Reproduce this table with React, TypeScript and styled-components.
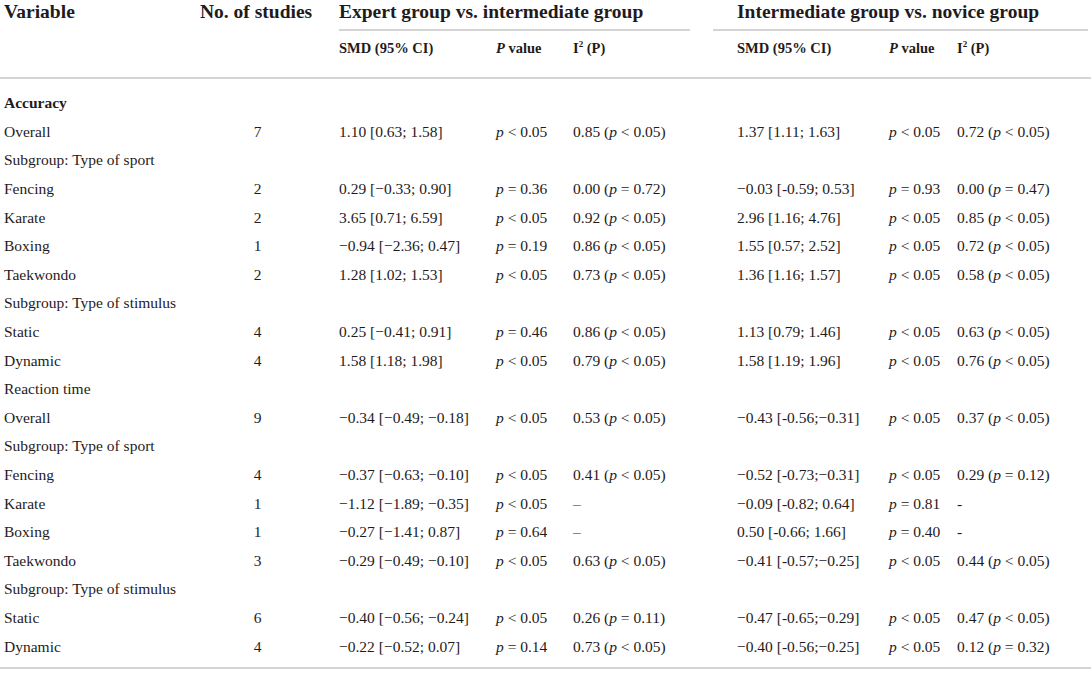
import React from 'react';
import styled, { createGlobalStyle } from 'styled-components';

type DataRow = {
    kind: 'data';
    label: string;
    n: string;
    cells: string[];
};

type LabelRow = {
    kind: 'label';
    label: string;
    bold?: boolean;
};

type Row = DataRow | LabelRow;

const rows: Row[] = [
    { kind: 'label', label: 'Accuracy', bold: true },
    { kind: 'data', label: 'Overall', n: '7', cells: ['1.10 [0.63; 1.58]', 'p < 0.05', '0.85 (p < 0.05)', '1.37 [1.11; 1.63]', 'p < 0.05', '0.72 (p < 0.05)'] },
    { kind: 'label', label: 'Subgroup: Type of sport' },
    { kind: 'data', label: 'Fencing', n: '2', cells: ['0.29 [\u22120.33; 0.90]', 'p = 0.36', '0.00 (p = 0.72)', '\u22120.03 [-0.59; 0.53]', 'p = 0.93', '0.00 (p = 0.47)'] },
    { kind: 'data', label: 'Karate', n: '2', cells: ['3.65 [0.71; 6.59]', 'p < 0.05', '0.92 (p < 0.05)', '2.96 [1.16; 4.76]', 'p < 0.05', '0.85 (p < 0.05)'] },
    { kind: 'data', label: 'Boxing', n: '1', cells: ['\u22120.94 [\u22122.36; 0.47]', 'p = 0.19', '0.86 (p < 0.05)', '1.55 [0.57; 2.52]', 'p < 0.05', '0.72 (p < 0.05)'] },
    { kind: 'data', label: 'Taekwondo', n: '2', cells: ['1.28 [1.02; 1.53]', 'p < 0.05', '0.73 (p < 0.05)', '1.36 [1.16; 1.57]', 'p < 0.05', '0.58 (p < 0.05)'] },
    { kind: 'label', label: 'Subgroup: Type of stimulus' },
    { kind: 'data', label: 'Static', n: '4', cells: ['0.25 [\u22120.41; 0.91]', 'p = 0.46', '0.86 (p < 0.05)', '1.13 [0.79; 1.46]', 'p < 0.05', '0.63 (p < 0.05)'] },
    { kind: 'data', label: 'Dynamic', n: '4', cells: ['1.58 [1.18; 1.98]', 'p < 0.05', '0.79 (p < 0.05)', '1.58 [1.19; 1.96]', 'p < 0.05', '0.76 (p < 0.05)'] },
    { kind: 'label', label: 'Reaction time' },
    { kind: 'data', label: 'Overall', n: '9', cells: ['\u22120.34 [\u22120.49; \u22120.18]', 'p < 0.05', '0.53 (p < 0.05)', '\u22120.43 [-0.56;\u22120.31]', 'p < 0.05', '0.37 (p < 0.05)'] },
    { kind: 'label', label: 'Subgroup: Type of sport' },
    { kind: 'data', label: 'Fencing', n: '4', cells: ['\u22120.37 [\u22120.63; \u22120.10]', 'p < 0.05', '0.41 (p < 0.05)', '\u22120.52 [-0.73;\u22120.31]', 'p < 0.05', '0.29 (p = 0.12)'] },
    { kind: 'data', label: 'Karate', n: '1', cells: ['\u22121.12 [\u22121.89; \u22120.35]', 'p < 0.05', '\u2013', '\u22120.09 [-0.82; 0.64]', 'p = 0.81', '-'] },
    { kind: 'data', label: 'Boxing', n: '1', cells: ['\u22120.27 [\u22121.41; 0.87]', 'p = 0.64', '\u2013', '0.50 [-0.66; 1.66]', 'p = 0.40', '-'] },
    { kind: 'data', label: 'Taekwondo', n: '3', cells: ['\u22120.29 [\u22120.49; \u22120.10]', 'p < 0.05', '0.63 (p < 0.05)', '\u22120.41 [-0.57;\u22120.25]', 'p < 0.05', '0.44 (p < 0.05)'] },
    { kind: 'label', label: 'Subgroup: Type of stimulus' },
    { kind: 'data', label: 'Static', n: '6', cells: ['\u22120.40 [\u22120.56; \u22120.24]', 'p < 0.05', '0.26 (p = 0.11)', '\u22120.47 [-0.65;\u22120.29]', 'p < 0.05', '0.47 (p < 0.05)'] },
    { kind: 'data', label: 'Dynamic', n: '4', cells: ['\u22120.22 [\u22120.52; 0.07]', 'p = 0.14', '0.73 (p < 0.05)', '\u22120.40 [-0.56;\u22120.25]', 'p < 0.05', '0.12 (p = 0.32)'] },
];

// italicise the standalone "p" in statistics text
const withItalicP = (text: string) =>
    text.split(/(\bp\b)/).map((part, i) => (part === 'p' ? <Ital key={i}>p</Ital> : part));

const SubHeads: React.FC = () => (
    <>
        <SubHead>SMD (95% CI)</SubHead>
        <SubHead><Ital>P</Ital> value</SubHead>
        <SubHead>I<Sup>2</Sup> (P)</SubHead>
    </>
);

const App: React.FC = () => {
    return (
        <>
            <GlobalStyle />
            <Table>
                <HeadGrid>
                    <TopHead>Variable</TopHead>
                    <TopHead>No. of studies</TopHead>
                    <GroupHead first>Expert group vs. intermediate group</GroupHead>
                    <GroupHead>Intermediate group vs. novice group</GroupHead>
                    <span />
                    <span />
                    <SubHeads />
                    <SubHeads />
                </HeadGrid>
                <BodyGrid>
                    {rows.map((row, i) =>
                        row.kind === 'label' ? (
                            <SectionCell key={i} bold={row.bold}>{row.label}</SectionCell>
                        ) : (
                            <React.Fragment key={i}>
                                <Cell>{row.label}</Cell>
                                <CountCell>{row.n}</CountCell>
                                {row.cells.map((c, j) => (
                                    <Cell key={j}>{withItalicP(c)}</Cell>
                                ))}
                            </React.Fragment>
                        )
                    )}
                </BodyGrid>
            </Table>
        </>
    );
};

export default App;

const GlobalStyle = createGlobalStyle`
  html, body {
    margin: 0;
    padding: 0;
    background: #ffffff;
  }
  body {
    font-family: "Liberation Serif", "Times New Roman", serif;
    color: #1f1b1c;
  }
`;

const columns = '196px 139px 157px 77px 164px 152px 68px 1fr';

const Table = styled.div`
  width: 1091px;
  height: 676px;
  box-sizing: border-box;
`;

const HeadGrid = styled.div`
  display: grid;
  grid-template-columns: ${columns};
  padding-left: 4px;
  border-bottom: 2px solid #d4d4d4;
  padding-bottom: 19px;
`;

const TopHead = styled.div`
  font-size: 19.5px;
  font-weight: bold;
  line-height: 24px;
  white-space: nowrap;
`;

const GroupHead = styled.div<{ first?: boolean }>`
  font-size: 19.5px;
  font-weight: bold;
  line-height: 24px;
  white-space: nowrap;
  padding-bottom: 5px;
  border-bottom: 2px solid #d4d4d4;
  grid-column: ${(p) => (p.first ? '3 / 6' : '6 / 9')};
  margin-right: ${(p) => (p.first ? '47px' : '3px')};
  margin-left: ${(p) => (p.first ? '0' : '-24px')};
  padding-left: ${(p) => (p.first ? '0' : '24px')};
`;

const SubHead = styled.div`
  font-size: 14.5px;
  font-weight: bold;
  line-height: 20px;
  padding-top: 7px;
  white-space: nowrap;
`;

const Sup = styled.sup`
  font-size: 9px;
  line-height: 0;
  vertical-align: 6px;
`;

const Ital = styled.i`
  font-style: italic;
`;

const BodyGrid = styled.div`
  display: grid;
  grid-template-columns: ${columns};
  grid-auto-rows: 28.6px;
  align-items: center;
  padding: 10px 0 6px 4px;
  border-bottom: 2px solid #d4d4d4;
  font-size: 15.5px;
`;

const Cell = styled.div`
  white-space: nowrap;
`;

const CountCell = styled.div`
  white-space: nowrap;
  text-align: center;
  padding-right: 24px;
`;

const SectionCell = styled.div<{ bold?: boolean }>`
  grid-column: 1 / -1;
  font-weight: ${(p) => (p.bold ? 'bold' : 'normal')};
`;
